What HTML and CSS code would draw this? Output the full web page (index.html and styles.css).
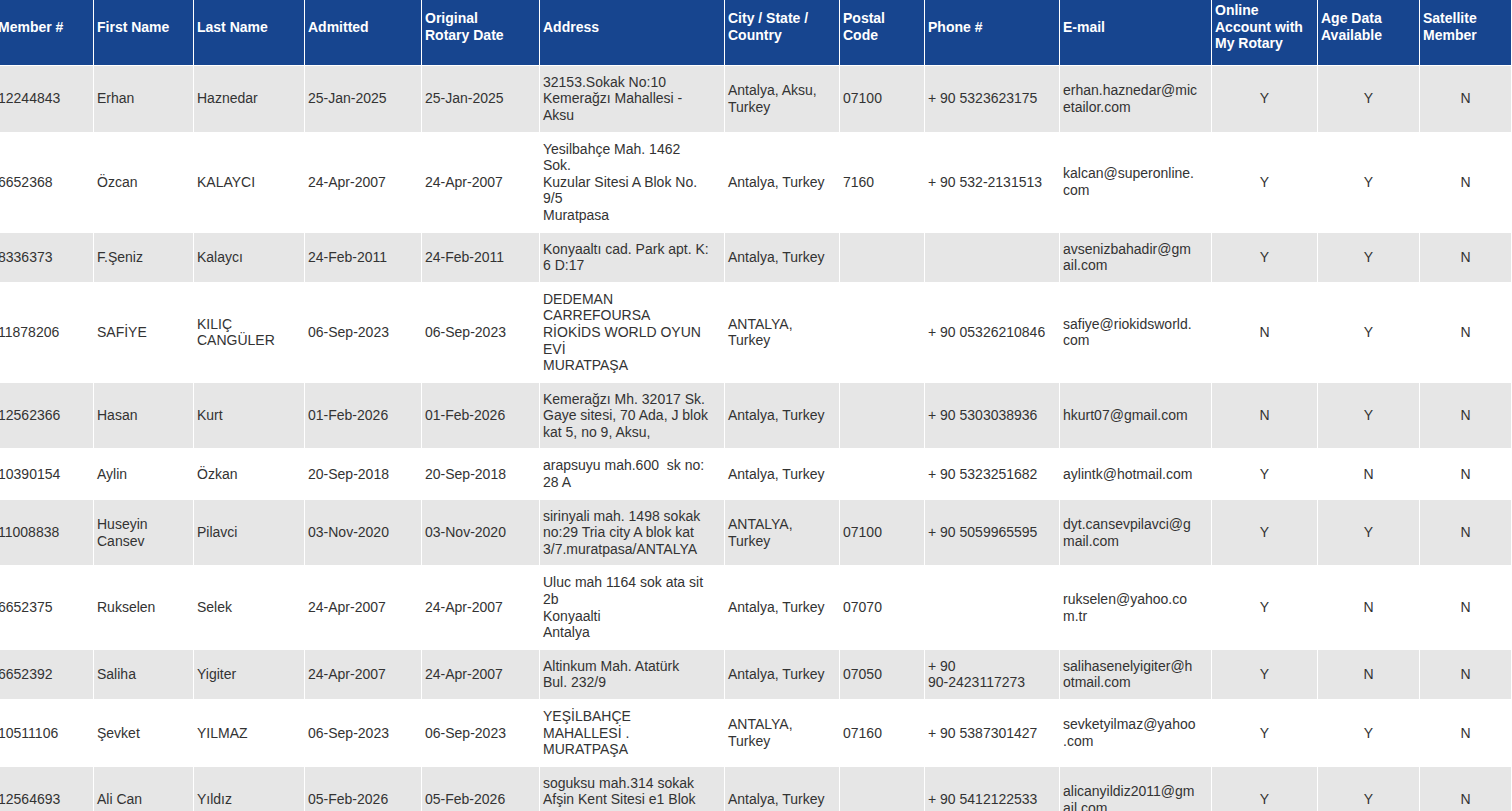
FILE: index.html
```html
<!DOCTYPE html>
<html lang="tr">
<head>
<meta charset="utf-8">
<title>Member Roster</title>
<link rel="stylesheet" href="styles.css">
</head>
<body>
<table class="roster">
  <colgroup>
    <col class="c-id"><col class="c-first"><col class="c-last"><col class="c-adm"><col class="c-orig"><col class="c-addr"><col class="c-city"><col class="c-postal"><col class="c-phone"><col class="c-mail"><col class="c-online"><col class="c-age"><col class="c-sat">
  </colgroup>
  <thead>
    <tr>
      <th>Member #</th>
      <th>First Name</th>
      <th>Last Name</th>
      <th>Admitted</th>
      <th>Original<br>Rotary Date</th>
      <th>Address</th>
      <th>City / State /<br>Country</th>
      <th>Postal<br>Code</th>
      <th>Phone #</th>
      <th>E-mail</th>
      <th>Online<br>Account with<br>My Rotary</th>
      <th>Age Data<br>Available</th>
      <th>Satellite<br>Member</th>
    </tr>
  </thead>
  <tbody>
    <tr>
      <td>12244843</td><td>Erhan</td><td>Haznedar</td><td>25-Jan-2025</td><td>25-Jan-2025</td>
      <td>32153.Sokak No:10<br>Kemerağzı Mahallesi -<br>Aksu</td>
      <td>Antalya, Aksu,<br>Turkey</td><td>07100</td><td>+ 90 5323623175</td>
      <td>erhan.haznedar@mic<br>etailor.com</td>
      <td class="flag">Y</td><td class="flag">Y</td><td class="flag">N</td>
    </tr>
    <tr>
      <td>6652368</td><td>Özcan</td><td>KALAYCI</td><td>24-Apr-2007</td><td>24-Apr-2007</td>
      <td>Yesilbahçe Mah. 1462<br>Sok.<br>Kuzular Sitesi A Blok No.<br>9/5<br>Muratpasa</td>
      <td>Antalya, Turkey</td><td>7160</td><td>+ 90 532-2131513</td>
      <td>kalcan@superonline.<br>com</td>
      <td class="flag">Y</td><td class="flag">Y</td><td class="flag">N</td>
    </tr>
    <tr>
      <td>8336373</td><td>F.Şeniz</td><td>Kalaycı</td><td>24-Feb-2011</td><td>24-Feb-2011</td>
      <td>Konyaaltı cad. Park apt. K:<br>6 D:17</td>
      <td>Antalya, Turkey</td><td></td><td></td>
      <td>avsenizbahadir@gm<br>ail.com</td>
      <td class="flag">Y</td><td class="flag">Y</td><td class="flag">N</td>
    </tr>
    <tr>
      <td>11878206</td><td>SAFİYE</td><td>KILIÇ<br>CANGÜLER</td><td>06-Sep-2023</td><td>06-Sep-2023</td>
      <td>DEDEMAN<br>CARREFOURSA<br>RİOKİDS WORLD OYUN<br>EVİ<br>MURATPAŞA</td>
      <td>ANTALYA,<br>Turkey</td><td></td><td>+ 90 05326210846</td>
      <td>safiye@riokidsworld.<br>com</td>
      <td class="flag">N</td><td class="flag">Y</td><td class="flag">N</td>
    </tr>
    <tr>
      <td>12562366</td><td>Hasan</td><td>Kurt</td><td>01-Feb-2026</td><td>01-Feb-2026</td>
      <td>Kemerağzı Mh. 32017 Sk.<br>Gaye sitesi, 70 Ada, J blok<br>kat 5, no 9, Aksu,</td>
      <td>Antalya, Turkey</td><td></td><td>+ 90 5303038936</td>
      <td>hkurt07@gmail.com</td>
      <td class="flag">N</td><td class="flag">Y</td><td class="flag">N</td>
    </tr>
    <tr>
      <td>10390154</td><td>Aylin</td><td>Özkan</td><td>20-Sep-2018</td><td>20-Sep-2018</td>
      <td>arapsuyu mah.600&nbsp; sk no:<br>28 A</td>
      <td>Antalya, Turkey</td><td></td><td>+ 90 5323251682</td>
      <td>aylintk@hotmail.com</td>
      <td class="flag">Y</td><td class="flag">N</td><td class="flag">N</td>
    </tr>
    <tr>
      <td>11008838</td><td>Huseyin<br>Cansev</td><td>Pilavci</td><td>03-Nov-2020</td><td>03-Nov-2020</td>
      <td>sirinyali mah. 1498 sokak<br>no:29 Tria city A blok kat<br>3/7.muratpasa/ANTALYA</td>
      <td>ANTALYA,<br>Turkey</td><td>07100</td><td>+ 90 5059965595</td>
      <td>dyt.cansevpilavci@g<br>mail.com</td>
      <td class="flag">Y</td><td class="flag">Y</td><td class="flag">N</td>
    </tr>
    <tr>
      <td>6652375</td><td>Rukselen</td><td>Selek</td><td>24-Apr-2007</td><td>24-Apr-2007</td>
      <td>Uluc mah 1164 sok ata sit<br>2b<br>Konyaalti<br>Antalya</td>
      <td>Antalya, Turkey</td><td>07070</td><td></td>
      <td>rukselen@yahoo.co<br>m.tr</td>
      <td class="flag">Y</td><td class="flag">N</td><td class="flag">N</td>
    </tr>
    <tr>
      <td>6652392</td><td>Saliha</td><td>Yigiter</td><td>24-Apr-2007</td><td>24-Apr-2007</td>
      <td>Altinkum Mah. Atatürk<br>Bul. 232/9</td>
      <td>Antalya, Turkey</td><td>07050</td><td>+ 90<br>90-2423117273</td>
      <td>salihasenelyigiter@h<br>otmail.com</td>
      <td class="flag">Y</td><td class="flag">N</td><td class="flag">N</td>
    </tr>
    <tr>
      <td>10511106</td><td>Şevket</td><td>YILMAZ</td><td>06-Sep-2023</td><td>06-Sep-2023</td>
      <td>YEŞİLBAHÇE<br>MAHALLESİ .<br>MURATPAŞA</td>
      <td>ANTALYA,<br>Turkey</td><td>07160</td><td>+ 90 5387301427</td>
      <td>sevketyilmaz@yahoo<br>.com</td>
      <td class="flag">Y</td><td class="flag">Y</td><td class="flag">N</td>
    </tr>
    <tr>
      <td>12564693</td><td>Ali Can</td><td>Yıldız</td><td>05-Feb-2026</td><td>05-Feb-2026</td>
      <td>soguksu mah.314 sokak<br>Afşin Kent Sitesi e1 Blok<br>K:10 D:73</td>
      <td>Antalya, Turkey</td><td></td><td>+ 90 5412122533</td>
      <td>alicanyildiz2011@gm<br>ail.com</td>
      <td class="flag">Y</td><td class="flag">Y</td><td class="flag">N</td>
    </tr>
  </tbody>
</table>
</body>
</html>
```
FILE: styles.css
```css
html, body {
  margin: 0;
  padding: 0;
  background: #ffffff;
}

body {
  font-family: "Liberation Sans", Arial, sans-serif;
  font-size: 14px;
  color: #333333;
  overflow: hidden;
}

.roster {
  table-layout: fixed;
  width: 1518px;
  margin: -1px 0 0 -6px;
  border-collapse: separate;
  border-spacing: 1px;
  background: #ffffff;
}

.c-id { width: 98px; }
.c-first { width: 99px; }
.c-last { width: 110px; }
.c-adm { width: 116px; }
.c-orig { width: 117px; }
.c-addr { width: 184px; }
.c-city { width: 114px; }
.c-postal { width: 84px; }
.c-phone { width: 134px; }
.c-mail { width: 151px; }
.c-online { width: 105px; }
.c-age { width: 101px; }
.c-sat { width: 91px; }

.roster th {
  background: #17458f;
  color: #ffffff;
  font-weight: bold;
  text-align: left;
  vertical-align: middle;
  line-height: 16.6px;
  padding: 2px 3px 13px 3px;
}

.roster td {
  vertical-align: middle;
  text-align: left;
  line-height: 16.6px;
  padding: 8px 3px;
}

.roster tbody tr:nth-child(odd) td {
  background: #e6e6e6;
}

.roster tbody tr:nth-child(even) td {
  background: #ffffff;
}

.roster td.flag {
  text-align: center;
}
```
